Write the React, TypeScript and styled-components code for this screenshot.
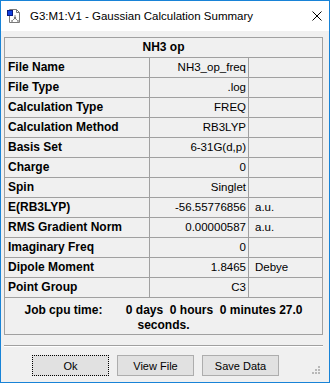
import React from 'react'
import styled, { createGlobalStyle } from 'styled-components'

const GlobalStyle = createGlobalStyle`
  html, body {
    margin: 0;
    padding: 0;
    background: #fff;
  }
  body {
    font-family: 'Liberation Sans', Arial, sans-serif;
    color: #000;
  }
`

const Window = styled.div`
  position: relative;
  width: 330px;
  height: 383px;
  box-sizing: border-box;
  border: 1px solid #1883d7;
  background: #f0f0f0;
  display: flex;
  flex-direction: column;
  overflow: hidden;
`

const TitleBar = styled.div`
  height: 30px;
  flex-shrink: 0;
  background: #fff;
  display: flex;
  align-items: center;
  padding: 0 7px 0 5px;
`

const Title = styled.span`
  flex: 1;
  margin-left: 8px;
  font-size: 11.5px;
  color: #000;
  white-space: nowrap;
`

const Content = styled.div`
  flex: 1;
  display: flex;
  flex-direction: column;
  padding: 6px 6px 0 3px;
`

const Grid = styled.div`
  display: grid;
  grid-template-columns: 145px 99px 1fr;
  border: 1px solid #a0a0a0;
`

const HeaderCell = styled.div`
  grid-column: 1 / -1;
  height: 20px;
  box-sizing: border-box;
  border-bottom: 1px solid #a0a0a0;
  text-align: center;
  font-weight: bold;
  font-size: 12px;
  line-height: 19px;
`

type Kind = 'label' | 'value' | 'unit'

const Cell = styled.div<{ $kind: Kind }>`
  height: 20px;
  box-sizing: border-box;
  border-bottom: 1px solid #a0a0a0;
  border-right: ${({ $kind }) => ($kind === 'unit' ? 'none' : '1px solid #a0a0a0')};
  font-size: ${({ $kind }) => ($kind === 'label' ? '12px' : '11.5px')};
  font-weight: ${({ $kind }) => ($kind === 'label' ? 'bold' : 'normal')};
  text-align: ${({ $kind }) => ($kind === 'value' ? 'right' : 'left')};
  padding: ${({ $kind }) => ($kind === 'label' ? '0 0 0 3px' : $kind === 'value' ? '0 2px 0 0' : '0 0 0 6px')};
  line-height: 19px;
  white-space: nowrap;
`

const Footer = styled.div`
  grid-column: 1 / -1;
  height: 36px;
  box-sizing: border-box;
  padding-top: 5px;
  text-align: center;
  font-weight: bold;
  font-size: 12px;
  line-height: 15px;
  white-space: pre;
`

const Separator = styled.div`
  margin-top: 10px;
  height: 1px;
  background: #a0a0a0;
  border-bottom: 1px solid #fff;
`

const ButtonRow = styled.div`
  display: flex;
  gap: 8px;
  margin-top: 8px;
  padding-left: 28px;
`

const Button = styled.button<{ $focused?: boolean }>`
  width: 77px;
  height: 21px;
  box-sizing: border-box;
  padding: 0;
  background: #e1e1e1;
  border: 1px ${({ $focused }) => ($focused ? 'dotted #000' : 'solid #adadad')};
  font-family: 'Liberation Sans', Arial, sans-serif;
  font-size: 11px;
  color: #000;
`

const Grip = styled.svg`
  position: absolute;
  right: 8px;
  bottom: 7px;
`

const rows: [string, string, string][] = [
  ['File Name', 'NH3_op_freq', ''],
  ['File Type', '.log', ''],
  ['Calculation Type', 'FREQ', ''],
  ['Calculation Method', 'RB3LYP', ''],
  ['Basis Set', '6-31G(d,p)', ''],
  ['Charge', '0', ''],
  ['Spin', 'Singlet', ''],
  ['E(RB3LYP)', '-56.55776856', 'a.u.'],
  ['RMS Gradient Norm', '0.00000587', 'a.u.'],
  ['Imaginary Freq', '0', ''],
  ['Dipole Moment', '1.8465', 'Debye'],
  ['Point Group', 'C3', ''],
]

const AppIcon = () => (
  <svg width="16" height="16" viewBox="0 0 16 16">
    <path d="M3.5 1.5h7l3 3v10h-10z" fill="#fff" stroke="#7a7a7a" />
    <path d="M10.5 1.5v3h3" fill="none" stroke="#7a7a7a" />
    <line x1="9" y1="10" x2="9" y2="7" stroke="#8a8a8a" />
    <line x1="9" y1="10" x2="6" y2="13" stroke="#8a8a8a" />
    <line x1="9" y1="10" x2="12" y2="13" stroke="#8a8a8a" />
    <circle cx="9" cy="10" r="1.2" fill="#777" />
    <circle cx="6" cy="13" r="1" fill="#999" />
    <circle cx="12" cy="13" r="1" fill="#999" />
    <rect x="1.5" y="2.5" width="5" height="5" fill="#1040e0" stroke="#0a1a80" />
  </svg>
)

const CloseIcon = () => (
  <svg width="10" height="10" viewBox="0 0 10 10">
    <path d="M0.5 0.5l9 9M9.5 0.5l-9 9" stroke="#000" strokeWidth="1" />
  </svg>
)

const App: React.FC = () => (
  <>
    <GlobalStyle />
    <Window>
      <TitleBar>
        <AppIcon />
        <Title>G3:M1:V1 - Gaussian Calculation Summary</Title>
        <CloseIcon />
      </TitleBar>
      <Content>
        <Grid>
          <HeaderCell>NH3 op</HeaderCell>
          {rows.map(([label, value, unit]) => (
            <React.Fragment key={label}>
              <Cell $kind="label">{label}</Cell>
              <Cell $kind="value">{value}</Cell>
              <Cell $kind="unit">{unit}</Cell>
            </React.Fragment>
          ))}
          <Footer>{'Job cpu time:       0 days  0 hours  0 minutes 27.0\nseconds.'}</Footer>
        </Grid>
        <Separator />
        <ButtonRow>
          <Button $focused>Ok</Button>
          <Button>View File</Button>
          <Button>Save Data</Button>
        </ButtonRow>
      </Content>
      <Grip width="9" height="9" viewBox="0 0 9 9">
        <rect x="6" y="0" width="2" height="2" fill="#b8b8b8" />
        <rect x="3" y="3" width="2" height="2" fill="#b8b8b8" />
        <rect x="6" y="3" width="2" height="2" fill="#b8b8b8" />
        <rect x="0" y="6" width="2" height="2" fill="#b8b8b8" />
        <rect x="3" y="6" width="2" height="2" fill="#b8b8b8" />
        <rect x="6" y="6" width="2" height="2" fill="#b8b8b8" />
      </Grip>
    </Window>
  </>
)

export default App
